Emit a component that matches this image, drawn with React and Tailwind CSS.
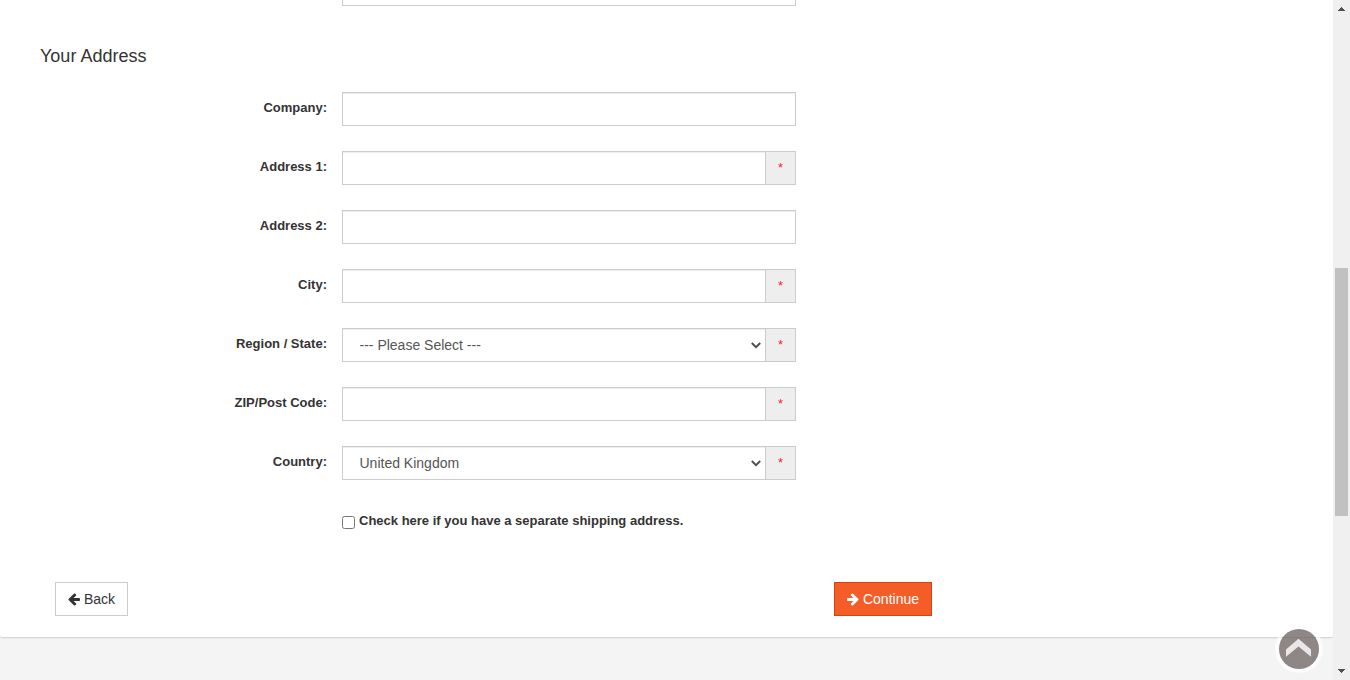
const ARROW_LEFT =
  'M1664 896v128q0 53-32.5 90.5t-84.5 37.5h-704l293 294q38 36 38 90t-38 90l-75 76q-37 37-90 37-52 0-91-37l-651-652q-37-37-37-90 0-52 37-91l651-650q38-38 91-38 52 0 90 38l75 74q38 38 38 91t-38 91l-293 293h704q52 0 84.5 37.5t32.5 90.5z';

function Arrow({ className = '' }) {
  return (
    <svg viewBox="128 0 1536 1792" className={`h-[14px] w-3 shrink-0 ${className}`} fill="currentColor">
      <path d={ARROW_LEFT} />
    </svg>
  );
}

const FIELDS = [
  { label: 'Company:' },
  { label: 'Address 1:', required: true },
  { label: 'Address 2:' },
  { label: 'City:', required: true },
  { label: 'Region / State:', required: true, value: '--- Please Select ---' },
  { label: 'ZIP/Post Code:', required: true },
  { label: 'Country:', required: true, value: 'United Kingdom' },
];

function Field({ label, required, value }) {
  return (
    <div className="flex h-[34px]">
      <label className="mr-[15px] w-[327px] pt-[6px] text-right text-[13px] leading-[19px] font-bold">{label}</label>
      <div className="flex w-[454px] border border-[#ccc] bg-white">
        {value ? (
          <div className="flex min-w-0 flex-1 items-center justify-between pr-[4px] pl-[16.5px] text-[14px] text-[#555] shadow-[inset_0_1px_1px_rgba(0,0,0,0.075)]">
            <span>{value}</span>
            <svg className="h-[10px] w-[10px]" viewBox="0 0 10 10" fill="none" stroke="#505050" strokeWidth="2">
              <path d="M0.8 3L5 7.2L9.2 3" />
            </svg>
          </div>
        ) : (
          <input className="min-w-0 flex-1 px-3 text-[14px] text-[#555] shadow-[inset_0_1px_1px_rgba(0,0,0,0.075)] outline-none" />
        )}
        {required && (
          <span className="w-[30px] border-l border-[#ccc] bg-[#eee] pt-[6px] text-center text-[13px] leading-[19px] text-[#ff1a30]">*</span>
        )}
      </div>
    </div>
  );
}

export default function App() {
  return (
    <div className="relative flex h-[680px] w-[1350px] overflow-hidden bg-[#f4f4f4] font-['Liberation_Sans',Arial,sans-serif] text-[#333]">
      <main className="w-[1333px]">
        <section className="h-[638px] rounded-b-[3px] border-b border-[#d5d5d5] bg-white shadow-[0_1px_1px_rgba(0,0,0,0.04)]">
          <div className="ml-[342px] h-[6px] w-[454px] border-x border-b border-[#ccc]" />
          <h4 className="mt-[40px] ml-10 h-[46px] text-[18px] leading-[20px]">Your Address</h4>
          <div className="flex flex-col gap-[25px]">
            {FIELDS.map((f) => (
              <Field key={f.label} {...f} />
            ))}
          </div>
          <label className="mt-[31px] ml-[342px] flex h-[19px] text-[13px] leading-[19px] font-bold">
            <input type="checkbox" className="mt-[5px] mr-1 h-[13px] w-[13px]" />
            Check here if you have a separate shipping address.
          </label>
          <div className="mt-[52px] ml-[55px] flex w-[877px] justify-between text-[14px]">
            <button className="flex h-[34px] w-[73px] items-center justify-center gap-1 border border-[#ccc] bg-white">
              <Arrow />
              Back
            </button>
            <button className="flex h-[34px] w-[98px] items-center justify-center gap-1 border border-[#d9410b] bg-[#f45d27] text-white">
              <Arrow className="-scale-x-100" />
              Continue
            </button>
          </div>
        </section>
      </main>
      <aside className="flex w-[17px] flex-col items-center bg-[#f0f0f0]">
        <svg className="h-[268px] w-[17px]" viewBox="0 0 17 268" fill="#505050" shapeRendering="crispEdges">
          <path d="M5 11V10H6V9H7V8H8V7H9V8H10V9H11V10H12V11Z" />
        </svg>
        <div className="h-[248px] w-[13px] bg-[#c1c1c1]" />
        <svg className="h-[164px] w-[17px]" viewBox="0 0 17 164" fill="#505050" shapeRendering="crispEdges">
          <path d="M5 153H12V154H11V155H10V156H9V157H8V156H7V155H6V154H5Z" />
        </svg>
      </aside>
      <button aria-label="Back to top" className="absolute top-[625px] left-[1275px] h-12 w-12">
        <svg viewBox="0 0 48 48" className="h-12 w-12">
          <circle cx="24" cy="24" r="24" fill="#fff" fillOpacity="0.7" />
          <circle cx="24" cy="24" r="20" fill="#8e8785" />
          <path d="M3.8 12.5H44.2" transform="translate(4.2 0) scale(.825 1)" stroke="#827b79" />
          <path d="M11 24.5L23.5 13.8L36 24.5V31.8L23.5 21.5L11 31.8Z" fill="#e9e7e8" />
        </svg>
      </button>
    </div>
  );
}
